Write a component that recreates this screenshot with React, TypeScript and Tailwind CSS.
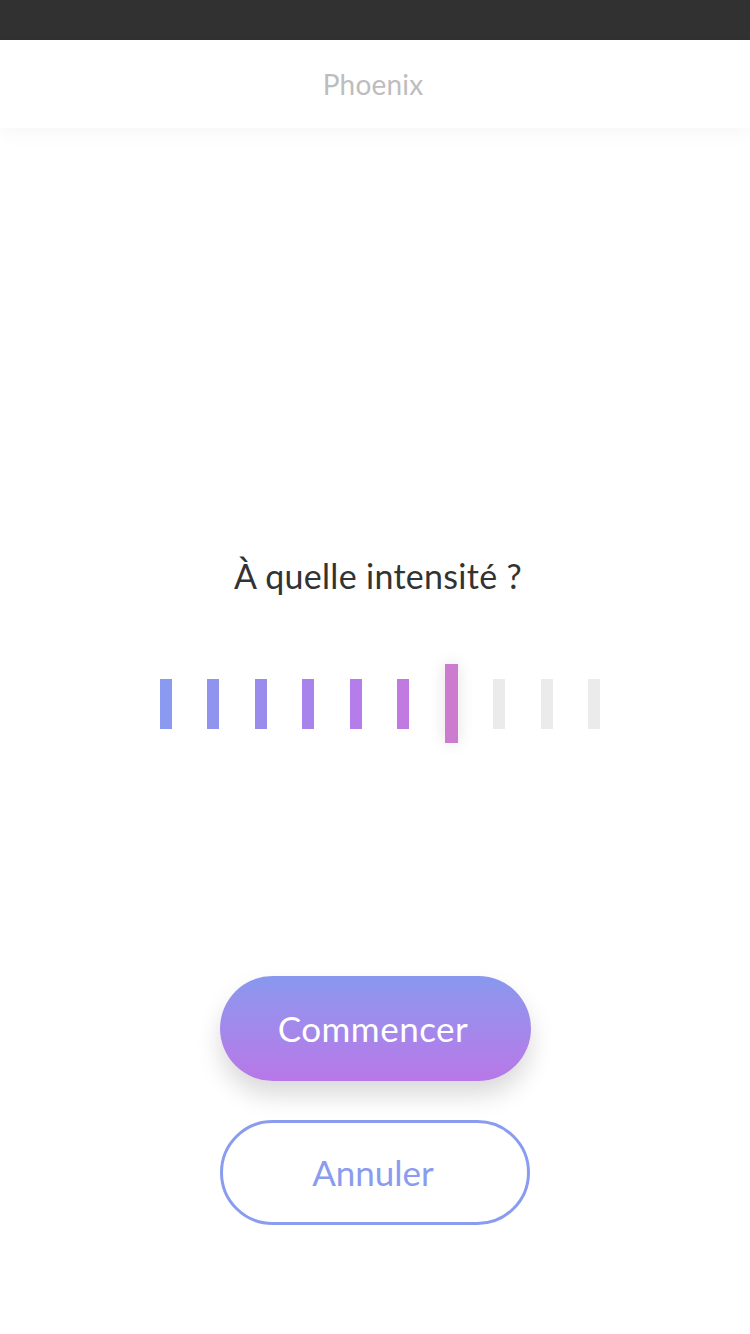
import React, { useState } from "react";

const bars = [
    "#8a9af0",
    "#9194ef",
    "#9a8cec",
    "#a684eb",
    "#b47dea",
    "#c17ae0",
    "#cd7bcf",
    "#ebebeb",
    "#ebebeb",
    "#ebebeb",
];

export default function App() {
    const [level, setLevel] = useState(6);

    return (
        <div className="w-[750px] h-[1334px] bg-white flex flex-col overflow-hidden" style={{ fontFamily: "Lato, 'Noto Sans', sans-serif" }}>
            {/* status bar */}
            <div className="h-[40px] bg-[#313131] shrink-0" />

            {/* header */}
            <header className="h-[88px] shrink-0 flex items-center justify-center bg-white shadow-[0_6px_18px_rgba(0,0,0,0.035)] relative z-10">
                <span className="text-[28px] text-[#bdbdbd] tracking-[0.2px] ml-[-4px]">Phoenix</span>
            </header>

            <main className="flex flex-col items-center">
                <h1 className="mt-[428px] ml-[6px] text-[34px] leading-[40px] text-[#333333] tracking-[0.3px]">À quelle intensité ?</h1>

                {/* intensity bars */}
                <div className="mt-[68px] ml-[10px] h-[79px] flex items-center gap-[35.5px]">
                    {bars.map((color, i) => {
                        const active = i === level;
                        const filled = i <= level;
                        return (
                            <button
                                key={i}
                                onClick={() => setLevel(i)}
                                className={active ? "w-[13px] h-[79px] shadow-[0_0_16px_rgba(0,0,0,0.12)]" : "w-[12px] h-[50px]"}
                                style={{ backgroundColor: filled ? color : "#ebebeb" }}
                            />
                        );
                    })}
                </div>

                {/* actions */}
                <button className="mt-[233px] w-[311px] h-[105px] rounded-full bg-gradient-to-b from-[#8898ee] to-[#b877e8] text-white text-[35px] tracking-[0.5px] pr-[4px] shadow-[0_14px_24px_rgba(0,0,0,0.15)]">
                    Commencer
                </button>
                <button className="mt-[39px] w-[310px] h-[105px] rounded-full border-[3px] border-[#8a9cf0] text-[#8a9cf0] text-[35px] pr-[4px] bg-white">
                    Annuler
                </button>
            </main>
        </div>
    );
}
